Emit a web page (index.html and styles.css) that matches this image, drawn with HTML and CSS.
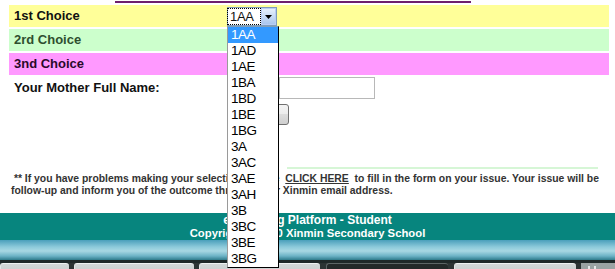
FILE: index.html
```html
<!DOCTYPE html>
<html lang="en">

<head>
    <meta charset="UTF-8">
    <meta name="viewport" content="width=device-width, initial-scale=1.0">
    <title>Class Selection</title>
    <link rel="stylesheet" href="styles.css">
</head>

<body>
    <div class="page">
        <div class="topline"></div>

        <form class="form">
            <div class="row row-yellow">
                <label class="label">1st Choice</label>
                <div class="select">
                    <span class="select-value">1AA</span>
                    <span class="select-arrow">
                        <svg width="7" height="4" viewBox="0 0 7 4"><path d="M0 0h7L3.5 4z" fill="#000"/></svg>
                    </span>
                    <!-- opened option list -->
                    <ul class="select-list">
                        <li class="active">1AA</li>
                        <li>1AD</li>
                        <li>1AE</li>
                        <li>1BA</li>
                        <li>1BD</li>
                        <li>1BE</li>
                        <li>1BG</li>
                        <li>3A</li>
                        <li>3AC</li>
                        <li>3AE</li>
                        <li>3AH</li>
                        <li>3B</li>
                        <li>3BC</li>
                        <li>3BE</li>
                        <li>3BG</li>
                    </ul>
                </div>
            </div>
            <div class="row row-green">
                <label class="label label-green">2rd Choice</label>
            </div>
            <div class="row row-pink">
                <label class="label label-pink">3nd Choice</label>
            </div>

            <div class="name-row">
                <label class="label name-label">Your Mother Full Name:</label>
                <input class="name-input" type="text">
            </div>

            <div class="button-row">
                <button class="submit" type="button">Submit</button>
            </div>
        </form>

        <div class="note-line"></div>
        <p class="note">&nbsp;** If you have problems making your selection, please&nbsp; <a href="#">CLICK HERE</a>&nbsp; to fill in the form on your issue. Your issue will be<br>follow-up and inform you of the outcome through your Xinmin email address.</p>

        <div class="footer">
            <div class="footer-title">e-Learning Platform - Student</div>
            <div class="footer-copy">Copyright &copy; 2010 Xinmin Secondary School</div>
        </div>
        <div class="band"></div>

        <div class="taskbar">
            <span class="task task-1"></span>
            <span class="task task-2"></span>
            <span class="task task-3"></span>
            <span class="task task-4 task-active"></span>
            <span class="task task-5"></span>
            <span class="tray"><span class="grip"></span></span>
        </div>
    </div>
</body>

</html>
```

FILE: styles.css
```css
html,
body {
    margin: 0;
    height: 100%;
    overflow: hidden;
    background-color: #fff;
}

body {
    font-family: "Liberation Sans", Arial, sans-serif;
    color: #111;
}

.topline {
    width: 356px;
    height: 2px;
    margin: 1px 0 0 115px;
    background-color: #6e1f6e; /* purple rule */
}

.form {
    margin: 2px 6px 0 9px;
}

.row {
    display: flex;
    height: 22px;
    margin-bottom: 2px;
}

.row-yellow {
    background-color: #ffff99;
}

.row-green {
    background-color: #ccffcc;
}

.row-pink {
    background-color: #ff99ff;
}

.label {
    width: 213px;
    padding-left: 5px;
    font-size: 13px;
    font-weight: bold;
    line-height: 22px;
}

.label-green {
    color: #2f4f2f;
}

.label-pink {
    color: #2a0a2a;
}

/* closed select box */
.select {
    position: relative;
    display: flex;
    align-self: flex-start;
    width: 50px;
    height: 19px;
    margin-top: 2px;
    border: 1px solid #7f9db9;
    box-sizing: border-box;
    background-color: #fff;
}

.select-value {
    flex: 1;
    margin: 1px 1px 1px 0;
    padding-left: 2px;
    outline: 1px dotted #000;
    font-size: 13px;
    line-height: 15px;
    letter-spacing: -0.3px;
}

.select-arrow {
    display: flex;
    align-items: center;
    justify-content: center;
    width: 13px;
    border: 1px solid #b9cdf5;
    background: linear-gradient(#e6f0fc, #aac6ee);
}

/* the opened option list lies over the rows below */
.select-list {
    position: absolute;
    top: 18px;
    left: -1px;
    z-index: 2;
    width: 52px;
    margin: 0;
    padding: 0;
    list-style: none;
    border: 1px solid #000;
    border-left-color: #9a9a9a;
    border-top-color: #7f9db9;
    box-sizing: border-box;
    background-color: #fff;
}

.select-list li {
    height: 16px;
    padding-left: 3px;
    font-size: 13.5px;
    line-height: 16px;
    letter-spacing: -0.5px;
    color: #000;
}

.select-list .active {
    background-color: #3399ff;
    color: #fff;
}

.name-row {
    display: flex;
    align-items: center;
    height: 22px;
    margin-top: 2px;
}

.name-label {
    width: 265px;
    color: #111;
}

.name-input {
    width: 96px;
    height: 22px;
    margin: 0;
    padding: 0 2px;
    border: 1px solid #b8b8b8;
    box-sizing: border-box;
    font-family: inherit;
}

.button-row {
    margin-top: 5px;
    padding-left: 218px;
}

.submit {
    display: block;
    width: 62px;
    height: 21px;
    border: 1px solid #707070;
    border-radius: 3px;
    background: linear-gradient(#f4f4f4, #ebebeb 50%, #dcdcdc 50%, #cfcfcf);
    font-family: inherit;
    font-size: 12px;
}

.note-line {
    width: 311px;
    height: 2px;
    margin: 42px 0 0 287px;
    background-color: #d6f6d6; /* faint green rule */
}

.note {
    margin: 4px 0 0;
    padding-left: 11px;
    font-size: 10.4px;
    font-weight: bold;
    line-height: 12px;
    color: #333;
}

.note a {
    color: #333;
    text-decoration: underline;
}

.footer {
    height: 27px;
    margin-top: 16px;
    padding-top: 1px;
    box-sizing: border-box;
    background-color: #07857e; /* teal */
    color: #fff;
    text-align: center;
    font-weight: bold;
}

.footer-title {
    font-size: 12px;
    line-height: 13px;
}

.footer-copy {
    font-size: 11.3px;
    line-height: 13px;
}

.band {
    height: 20px;
    background: linear-gradient(#4a9fbb 0%, #8dcadb 35%, #a8d8e3 55%, #6cb3c6 80%, #2e7b8b 100%);
}

.taskbar {
    display: flex;
    gap: 5px;
    height: 7px;
    overflow: hidden;
    border-top: 3px solid #1e2828;
    background-color: #2c3434;
}

.task {
    height: 20px;
    border-top: 1px solid #eef2f2;
    border-left: 1px solid #e2e6e6;
    border-radius: 3px 3px 0 0;
    background: linear-gradient(#d2d7d7, #bcc2c2);
}

.task-1 {
    width: 68px;
}

.task-2 {
    width: 119px;
}

.task-3 {
    width: 120px;
}

.task-4 {
    width: 121px;
    margin-left: 1px;
}

.task-5 {
    width: 121px;
    margin-left: 1px;
}

.task-active {
    border-color: #5d6666;
    background: #232929;
}

.tray {
    flex: 1;
    padding: 3px 0 0 7px;
    background-color: #9aa3a3;
}

.grip {
    display: block;
    width: 8px;
    height: 4px;
    border-left: 2px dotted #e4e8e8;
    border-right: 2px dotted #e4e8e8;
    box-sizing: border-box;
}
```
